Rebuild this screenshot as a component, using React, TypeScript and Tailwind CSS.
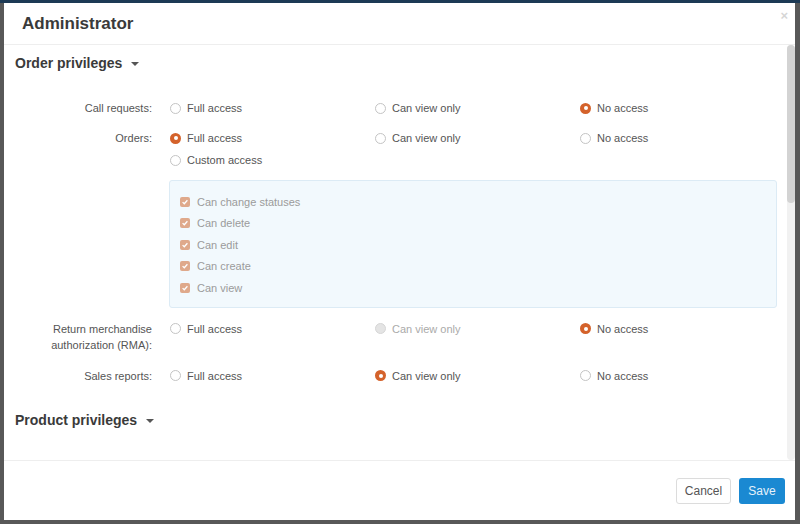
import type { ReactNode } from "react";

type Level = "full" | "view" | "none";

const font = { fontFamily: '"Liberation Sans", Arial, sans-serif' };

function Radio({ checked = false, disabled = false }: { checked?: boolean; disabled?: boolean }) {
  if (checked) {
    return (
      <span className="flex h-[11px] w-[11px] shrink-0 items-center justify-center rounded-full bg-[#d4622b]">
        <span className="h-[4px] w-[4px] rounded-full bg-white" />
      </span>
    );
  }
  return (
    <span
      className={
        disabled
          ? "h-[11px] w-[11px] shrink-0 rounded-full border border-[#d6d6d6] bg-[#e4e4e4]"
          : "h-[11px] w-[11px] shrink-0 rounded-full border border-[#c4c4c4] bg-white"
      }
    />
  );
}

function Option({ label, checked, disabled }: { label: string; checked?: boolean; disabled?: boolean }) {
  return (
    <label className="flex h-4 items-center gap-[6px]">
      <Radio checked={checked} disabled={disabled} />
      <span className={disabled ? "text-[#aaaaaa]" : "text-[#555555]"}>{label}</span>
    </label>
  );
}

function Row({ label, children, className = "" }: { label: ReactNode; children: ReactNode; className?: string }) {
  return (
    <div className={`flex text-[11px] leading-4 ${className}`}>
      <div className="w-[148px] shrink-0 text-right text-[#555555]">{label}</div>
      <div className="ml-[18px] flex-1">{children}</div>
    </div>
  );
}

function Choices({ value, disabled }: { value: Level; disabled?: Level }) {
  return (
    <div className="grid grid-cols-[205px_205px_205px]">
      <Option label="Full access" checked={value === "full"} disabled={disabled === "full"} />
      <Option label="Can view only" checked={value === "view"} disabled={disabled === "view"} />
      <Option label="No access" checked={value === "none"} disabled={disabled === "none"} />
    </div>
  );
}

function Check({ label }: { label: string }) {
  return (
    <div className="flex h-[21.5px] items-center gap-[7px]">
      <span className="flex h-[10px] w-[10px] items-center justify-center rounded-[2px] bg-[#dfa98b]">
        <svg viewBox="0 0 10 10" className="h-[8px] w-[8px]" fill="none" stroke="white" strokeWidth="1.6" aria-hidden="true">
          <path d="M2 5.2 4.1 7.2 8 2.8" />
        </svg>
      </span>
      <span className="text-[#9b9b9b]">{label}</span>
    </div>
  );
}

function SectionTitle({ children }: { children: ReactNode }) {
  return (
    <div className="flex items-center gap-[9px] pl-[11px] text-[14px] font-bold text-[#3a3a3a]">
      {children}
      <span className="mt-[1px] h-0 w-0 border-x-[4px] border-t-[4px] border-x-transparent border-t-[#555555]" />
    </div>
  );
}

export default function App() {
  return (
    <div style={font} className="h-[524px] w-[800px] overflow-hidden border-t-[3px] border-[#1d3a55] bg-[#585858]">
      <div className="ml-[4px] flex h-[517px] w-[791px] flex-col bg-white">
        <div className="relative flex h-[42px] shrink-0 items-center border-b border-[#eeeeee] pl-[18px]">
          <h1 className="text-[17px] font-bold text-[#3a3a3a]">Administrator</h1>
          <span className="absolute right-[7px] top-[3px] text-[13px] font-bold text-[#d6d6d6]">×</span>
        </div>

        <div className="flex min-h-0 flex-1">
          <div className="flex-1 overflow-hidden pt-[8px]">
            <SectionTitle>Order privileges</SectionTitle>

            <Row label="Call requests:" className="mt-[26px]">
              <Choices value="none" />
            </Row>

            <Row label="Orders:" className="mt-[14px]">
              <Choices value="full" />
              <div className="mt-[6px]">
                <Option label="Custom access" />
              </div>
              <div className="-ml-[1px] mt-[12px] w-[608px] rounded-[3px] border border-[#dcebf5] bg-[#f2f9fd] pb-[8px] pl-[10px] pt-[10px]">
                <Check label="Can change statuses" />
                <Check label="Can delete" />
                <Check label="Can edit" />
                <Check label="Can create" />
                <Check label="Can view" />
              </div>
            </Row>

            <Row
              label={
                <>
                  Return merchandise
                  <br />
                  authorization (RMA):
                </>
              }
              className="mt-[13px]"
            >
              <Choices value="none" disabled="view" />
            </Row>

            <Row label="Sales reports:" className="mt-[15px]">
              <Choices value="view" />
            </Row>

            <div className="mt-[26px]">
              <SectionTitle>Product privileges</SectionTitle>
            </div>
          </div>

          <div className="flex w-[8px] shrink-0 flex-col rounded-[4px] bg-[#f1f1f1]">
            <div className="h-[158px] rounded-[4px] bg-[#d3d3d3]" />
          </div>
        </div>

        <div className="flex h-[60px] shrink-0 items-center justify-end gap-[8px] border-t border-[#eeeeee] pr-[10px] text-[12px]">
          <button type="button" className="h-[26px] w-[55px] rounded-[3px] border border-[#dcdcdc] bg-white text-[#555555]">
            Cancel
          </button>
          <button type="button" className="h-[26px] w-[46px] rounded-[3px] bg-[#1a89d2] text-[#e6f2fb]">
            Save
          </button>
        </div>
      </div>
    </div>
  );
}
